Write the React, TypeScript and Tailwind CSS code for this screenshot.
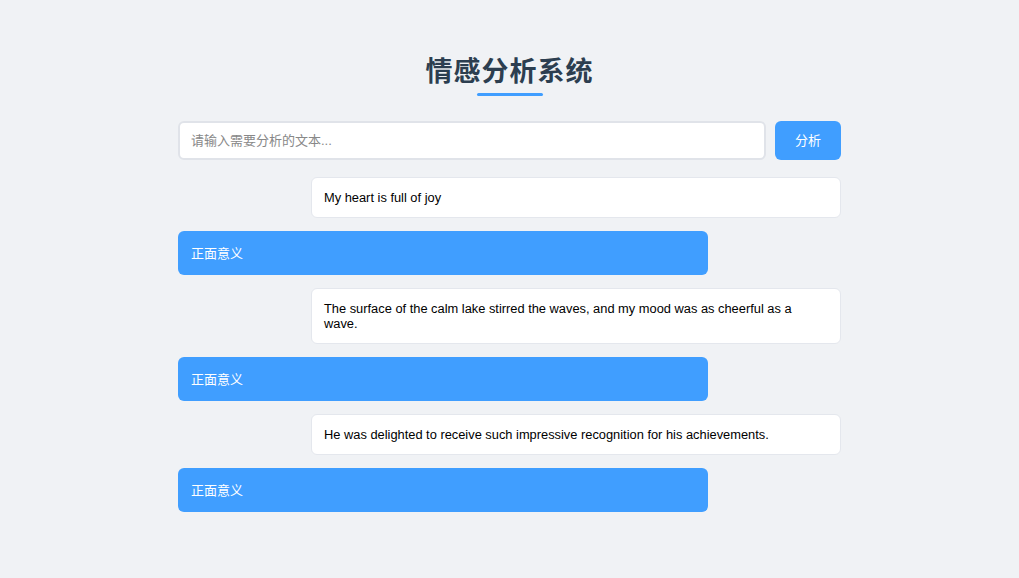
import React from "react";

const items = [
  { text: "My heart is full of joy", result: "正面意义" },
  {
    text: "The surface of the calm lake stirred the waves, and my mood was as cheerful as a wave.",
    result: "正面意义",
  },
  {
    text: "He was delighted to receive such impressive recognition for his achievements.",
    result: "正面意义",
  },
];

export default function App() {
  return (
    <div
      className="min-h-[578px] w-full bg-[#f0f2f5]"
      style={{ fontFamily: '"Liberation Sans", Arial, "Noto Sans CJK SC", sans-serif' }}
    >
      <div className="mx-auto w-[663px] pt-[52px]">
        <div className="flex flex-col items-center">
          <h1 className="text-[27px] font-bold leading-[40px] tracking-[1px] text-[#2c3e50]">
            情感分析系统
          </h1>
          <div className="mt-[1px] h-[3px] w-[66px] rounded-full bg-[#409eff]" />
        </div>

        <div className="mt-[25px] flex gap-[9px]">
          <input
            className="h-[39px] flex-1 rounded-[6px] border-2 border-[#e0e3e9] bg-white px-[11px] text-[13px] text-[#333] outline-none placeholder:text-[#888]"
            placeholder="请输入需要分析的文本..."
          />
          <button className="h-[39px] w-[66px] rounded-[6px] bg-[#409eff] text-[13px] text-white">
            分析
          </button>
        </div>

        <div className="mt-[17px] flex flex-col gap-[13px]">
          {items.map((it, i) => (
            <React.Fragment key={i}>
              <div className="ml-auto w-[530px] rounded-[6px] border border-[#e4e7ed] bg-white px-[12px] py-[12px] text-[12.85px] leading-[15px] text-black">
                {it.text}
              </div>
              <div className="w-[530px] rounded-[6px] bg-[#409eff] pl-[13px] pt-[13px] pb-[11px] text-[13px] leading-[20px] text-white">
                {it.result}
              </div>
            </React.Fragment>
          ))}
        </div>
      </div>
    </div>
  );
}
